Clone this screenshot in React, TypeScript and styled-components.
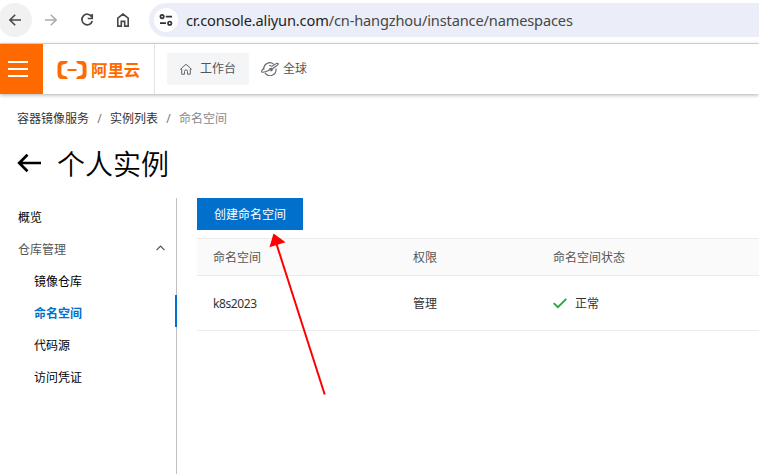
import React from 'react';
import styled, { createGlobalStyle } from 'styled-components';

const GlobalStyle = createGlobalStyle`
  * { box-sizing: border-box; }
  html, body { margin: 0; background: #fff; overflow: hidden; }
  body { font: 12px/18px "Noto Sans", "Noto Sans CJK SC", sans-serif; color: #000; }
  svg { display: block; flex: none; }
`;

const Page = styled.div`
  width: 100%;
  height: 474px;
  overflow: hidden;
  display: flex;
  flex-direction: column;
`;

const BrowserBar = styled.div`
  height: 44px;
  flex: none;
  display: flex;
  align-items: flex-start;
  padding-top: 3px;
  border-bottom: 1px solid #dddddd;
`;

const NavButton = styled.div<{ $active?: boolean }>`
  width: 34px;
  height: 34px;
  margin-right: 2px;
  border-radius: 50%;
  display: flex;
  align-items: center;
  justify-content: center;
  background: ${(p) => (p.$active ? '#f1f1f1' : 'transparent')};
`;

const NavGroup = styled.div`
  display: flex;
  margin-left: -2px;
  width: 151px;
`;

const AddressBar = styled.div`
  flex: 1;
  height: 34px;
  display: flex;
  align-items: center;
  padding-left: 5px;
  background: #ebeef8;
  border-radius: 17px 0 0 17px;
`;

const SiteInfo = styled.div`
  width: 24px;
  height: 24px;
  border-radius: 50%;
  background: #fff;
  display: flex;
  align-items: center;
  justify-content: center;
  margin-right: 8px;
`;

const Url = styled.div`
  font: 14.6px/20px "Noto Sans", sans-serif;
  letter-spacing: -0.15px;
  color: #474747;
  white-space: nowrap;
  padding-bottom: 1px;
  span { color: #1f1f1f; }
`;

const Header = styled.header`
  height: 50px;
  flex: none;
  display: flex;
  align-items: center;
  box-shadow: 0 1px 4px rgba(0, 0, 0, 0.32);
`;

const MenuButton = styled.div`
  width: 43px;
  height: 50px;
  background: #ff6a00;
  display: flex;
  flex-direction: column;
  align-items: flex-start;
  padding: 17px 0 0 8px;
  gap: 5px;
`;

const MenuLine = styled.i`
  width: 20px;
  height: 2px;
  background: #fff;
`;

const Logo = styled.div`
  width: 112px;
  height: 50px;
  padding: 2px 0 0 14px;
  display: flex;
  align-items: center;
  gap: 4px;
  border-right: 1px solid #e3e4e6;
  color: #ff6a00;
  font-size: 16.4px;
  font-weight: 700;
  white-space: nowrap;
`;

const HeaderLink = styled.div<{ $filled?: boolean }>`
  height: 32px;
  display: flex;
  align-items: center;
  margin-left: 12px;
  padding: ${(p) => (p.$filled ? '0 13px' : '0')};
  gap: ${(p) => (p.$filled ? '8px' : '4px')};
  background: ${(p) => (p.$filled ? '#f4f5f7' : 'transparent')};
  border-radius: 2px;
  color: #555;
`;

const Breadcrumb = styled.nav`
  display: flex;
  height: 18px;
  margin: 16px 0 0 17px;
  color: #333;
`;

const Slash = styled.span`
  width: 21px;
  text-align: center;
  color: #777;
`;

const CurrentCrumb = styled.span`
  color: #888;
`;

const TitleRow = styled.div`
  display: flex;
  align-items: center;
  gap: 15px;
  height: 42px;
  margin: 14px 0 14px 17px;
`;

const Title = styled.h1`
  margin: 0;
  font-size: 28px;
  line-height: 42px;
  font-weight: 350;
  font-family: "Noto Sans CJK SC", sans-serif;
`;

const Body = styled.main`
  flex: 1;
  display: flex;
`;

const Sidebar = styled.aside`
  width: 177px;
  border-right: 1px solid #c0c0c0;
  padding-top: 1px;
`;

const SideItem = styled.div<{ $nested?: boolean; $selected?: boolean; $muted?: boolean }>`
  height: 32px;
  display: flex;
  justify-content: space-between;
  align-items: center;
  padding: 5px 12px 0 ${(p) => (p.$nested ? 34 : 18)}px;
  margin-right: -1px;
  border-right: ${(p) => (p.$selected ? '2px solid #0070cc' : '0')};
  color: ${(p) => (p.$selected ? '#0070cc' : p.$muted ? '#555' : '#000')};
  font-weight: ${(p) => (p.$selected ? 700 : 400)};
  svg { margin-bottom: 1px; }
`;

const Content = styled.section`
  flex: 1;
  margin-left: 20px;
`;

const PrimaryButton = styled.button`
  display: block;
  width: 106px;
  height: 32px;
  padding: 1px 0 0;
  border: 0;
  background: #0070cc;
  color: #fff;
  font: inherit;
`;

const TableRow = styled.div<{ $head?: boolean }>`
  display: grid;
  grid-template-columns: 200px 140px 1fr;
  align-items: center;
  height: ${(p) => (p.$head ? 38 : 55)}px;
  margin-top: ${(p) => (p.$head ? 8 : 0)}px;
  padding-top: 2px;
  border-top: ${(p) => (p.$head ? '1px solid #ebebeb' : '0')};
  border-bottom: 1px solid #ebebeb;
  background: ${(p) => (p.$head ? '#fafafa' : '#fff')};
  color: ${(p) => (p.$head ? '#555' : '#333')};
`;

const Cell = styled.div`
  padding-left: 16px;
  display: flex;
  align-items: center;
  gap: 8px;
  svg { margin-bottom: 2px; }
`;

const Latin = styled.span`
  letter-spacing: -0.4px;
`;

const Pointer = styled.svg`
  position: absolute;
  left: 265px;
  top: 230px;
`;

const BackIcon = () => (
  <svg width="12" height="12" viewBox="0 0 12 12" fill="none" stroke="#474747" strokeWidth="1.6">
    <path d="M12 6H1M6.2.7L.9 6l5.3 5.3" />
  </svg>
);

const ForwardIcon = () => (
  <svg width="12" height="12" viewBox="0 0 12 12" fill="none" stroke="#ababab" strokeWidth="1.5">
    <path d="M0 6h11M5.8.7L11.1 6l-5.3 5.3" />
  </svg>
);

const ReloadIcon = () => (
  <svg width="14" height="14" viewBox="0 0 14 14" fill="none" stroke="#474747" strokeWidth="1.7">
    <path d="M11.7 3.7A5.3 5.3 0 1 0 12.3 8M12.2 1v4.5H7.7" />
  </svg>
);

const HomeIcon = () => (
  <svg width="12" height="14" viewBox="0 0 12 14" fill="none" stroke="#474747" strokeWidth="1.6">
    <path d="M.8 5.1L6 1l5.2 4.1v8H7.7V8.4H4.3v4.7H.8z" />
  </svg>
);

const TuneIcon = () => (
  <svg width="14" height="12" viewBox="0 0 14 12" fill="none" stroke="#303134" strokeWidth="1.7">
    <circle cx="3.1" cy="2.6" r="1.7" />
    <circle cx="10.7" cy="9.2" r="1.7" />
    <path d="M6.8 2.6H13M1 9.2h6" />
  </svg>
);

const BracketLogo = () => (
  <svg width="30" height="18" viewBox="0 0 30 18" fill="#ff6a00">
    <path d="M11 0H5C2 0 .5 2 .5 5v8c0 3 1.500 5 4.500 5h6l-1.400-2.600-3.600-.9c-1-.3-1.600-.9-1.600-1.900V5.400c0-1 .6-1.600 1.600-1.900l3.600-.9z" />
    <path d="M19 0h6c3 0 4.500 2 4.500 5v8c0 3-1.500 5-4.500 5h-6l1.400-2.600 3.600-.9c1-.3 1.600-.9 1.600-1.900V5.400c0-1-.6-1.600-1.600-1.900l-3.600-.9z" />
    <path d="M10.500 8h9v2h-9z" />
  </svg>
);

const WorkbenchIcon = () => (
  <svg width="12" height="12" viewBox="0 0 12 12" fill="none" stroke="#666" strokeWidth="1">
    <path d="M.6 6.800L1.600 5 6 1.300 10.400 5l1 1.800M1.700 5.500v5.700h2.800V8.400a1.500 1.500 0 0 1 3 0v2.800h2.800V5.500" />
  </svg>
);

const PlanetIcon = () => (
  <svg width="18" height="14" viewBox="0 0 18 14" fill="none" stroke="#666" strokeWidth="1.100">
    <path d="M12.800 2.300A6 6 0 0 0 2.900 7.800M4 10.900A6 6 0 0 0 14.900 6.500" />
    <path d="M2.800 6.200C1.100 7.800.3 9.300.8 9.900c.9 1.100 5.600-.3 9.900-3.100" />
    <path d="M8.200 3.500l2.800.7 3.600-2.300c1.400-.8 2.500-.7 2.700-.3.300.5-.4 1.400-1.700 2.200L12 6.200l-1.200 2.300-.8.200.3-2.300-2.600.9" />
  </svg>
);

const TitleArrow = () => (
  <svg width="25" height="20" viewBox="0 0 25 20" fill="none" stroke="#000" strokeWidth="2.700">
    <path d="M24 10H2M10.500 1.700L2.200 10l8.300 8.300" />
  </svg>
);

const ChevronUp = () => (
  <svg width="9" height="9" viewBox="0 0 9 9" fill="none" stroke="#555" strokeWidth="1.100">
    <path d="M.6 5L4.500 1l3.900 4" />
  </svg>
);

const CheckIcon = () => (
  <svg width="14" height="12" viewBox="0 0 14 12" fill="none" stroke="#1aab40" strokeWidth="1.800">
    <path d="M.7 6.200l4.200 4L13.300 1.800" />
  </svg>
);

export default function App() {
  return (
    <Page>
      <GlobalStyle />
      <BrowserBar>
        <NavGroup>
          <NavButton $active><BackIcon /></NavButton>
          <NavButton><ForwardIcon /></NavButton>
          <NavButton><ReloadIcon /></NavButton>
          <NavButton><HomeIcon /></NavButton>
        </NavGroup>
        <AddressBar>
          <SiteInfo><TuneIcon /></SiteInfo>
          <Url><span>cr.console.aliyun.com</span>/cn-hangzhou/instance/namespaces</Url>
        </AddressBar>
      </BrowserBar>
      <Header>
        <MenuButton><MenuLine /><MenuLine /><MenuLine /></MenuButton>
        <Logo><BracketLogo />阿里云</Logo>
        <HeaderLink $filled><WorkbenchIcon />工作台</HeaderLink>
        <HeaderLink><PlanetIcon />全球</HeaderLink>
      </Header>
      <Breadcrumb>
        <span>容器镜像服务</span><Slash>/</Slash>
        <span>实例列表</span><Slash>/</Slash>
        <CurrentCrumb>命名空间</CurrentCrumb>
      </Breadcrumb>
      <TitleRow><TitleArrow /><Title>个人实例</Title></TitleRow>
      <Body>
        <Sidebar>
          <SideItem>概览</SideItem>
          <SideItem $muted>仓库管理<ChevronUp /></SideItem>
          <SideItem $nested>镜像仓库</SideItem>
          <SideItem $nested $selected>命名空间</SideItem>
          <SideItem $nested>代码源</SideItem>
          <SideItem $nested>访问凭证</SideItem>
        </Sidebar>
        <Content>
          <PrimaryButton>创建命名空间</PrimaryButton>
          <TableRow $head>
            <Cell>命名空间</Cell><Cell>权限</Cell><Cell>命名空间状态</Cell>
          </TableRow>
          <TableRow>
            <Cell><Latin>k8s2023</Latin></Cell><Cell>管理</Cell><Cell><CheckIcon />正常</Cell>
          </TableRow>
        </Content>
      </Body>
      <Pointer width="64" height="168" viewBox="0 0 64 168">
        <path d="M11.500 14L59.700 164.500" stroke="#f00" strokeWidth="2" />
        <path d="M8.500 3.500L20.500 12.300 4.500 17.200z" fill="#f00" />
      </Pointer>
    </Page>
  );
}
